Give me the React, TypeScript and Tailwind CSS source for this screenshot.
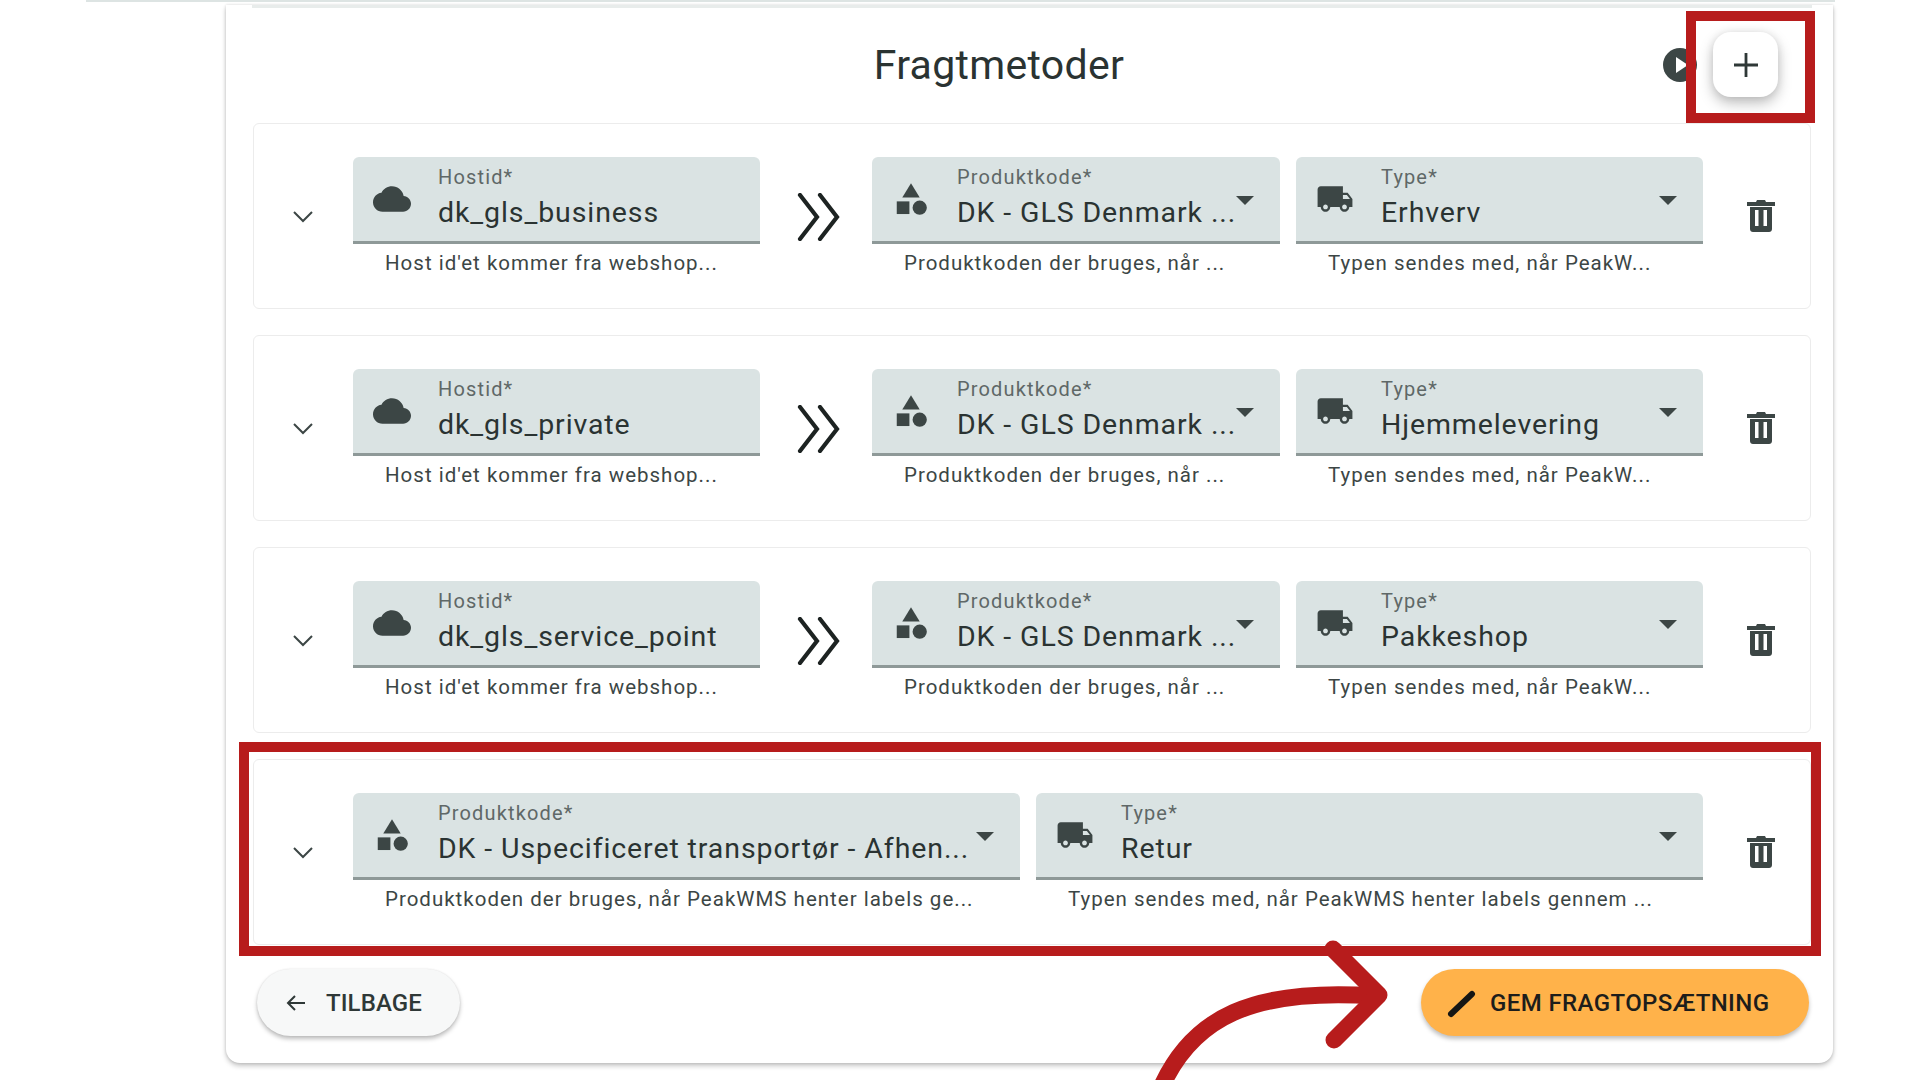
import type { ReactNode } from "react";

function Icon({ size, className, children }: { size: number; className?: string; children: ReactNode }) {
  return (
    <svg width={size} height={size} viewBox="0 0 24 24" fill="currentColor" className={className}>
      {children}
    </svg>
  );
}

function CloudIcon() {
  return (
    <Icon size={38}>
      <path d="M19.35 10.04C18.67 6.59 15.64 4 12 4 9.11 4 6.6 5.64 5.35 8.04 2.34 8.36 0 10.91 0 14c0 3.31 2.69 6 6 6h13c2.76 0 5-2.24 5-5 0-2.64-2.05-4.78-4.65-4.96z" />
    </Icon>
  );
}

function CategoryIcon() {
  return (
    <Icon size={38}>
      <path d="M12 2l-5.5 9h11z" />
      <circle cx="17.5" cy="17.5" r="4.5" />
      <path d="M3 13.5h8v8H3z" />
    </Icon>
  );
}

function TruckIcon() {
  return (
    <Icon size={38}>
      <path d="M20 8h-3V4H3c-1.1 0-2 .9-2 2v11h2c0 1.66 1.34 3 3 3s3-1.34 3-3h6c0 1.66 1.34 3 3 3s3-1.34 3-3h2v-5l-3-4zM6 18.5c-.83 0-1.5-.67-1.5-1.5s.67-1.5 1.5-1.5 1.5.67 1.5 1.5-.67 1.5-1.5 1.5zm13.5-9l1.96 2.5H17V9.5h2.5zm-1.5 9c-.83 0-1.5-.67-1.5-1.5s.67-1.5 1.5-1.5 1.5.67 1.5 1.5-.67 1.5-1.5 1.5z" />
    </Icon>
  );
}

function TrashIcon() {
  return (
    <svg width="28" height="32" viewBox="0 0 28 32" fill="#3c4645">
      <path
        fillRule="evenodd"
        d="M10 0h8l1 2h9v4H0V2h9zM3 7h22v22c0 1.7-1.3 3-3 3H6c-1.7 0-3-1.3-3-3zM8 10v16h3.5V10zM16.5 10v16H20V10z"
      />
    </svg>
  );
}

function Chevron() {
  return (
    <svg width="22" height="13" viewBox="0 0 22 13" fill="none" stroke="#3c4645" strokeWidth="2">
      <path d="M2 2l9 9 9-9" />
    </svg>
  );
}

function DoubleArrow() {
  return (
    <svg width="44" height="48" viewBox="0 0 44 48" fill="none" stroke="#1d2322" strokeWidth="4.2" strokeLinecap="round">
      <path d="M3 2l17 22L3 46" />
      <path d="M23 2l17 22-17 22" />
    </svg>
  );
}

interface FieldProps {
  icon: ReactNode;
  label: string;
  value: string;
  helper: string;
  width: string;
  select?: boolean;
}

function Field({ icon, label, value, helper, width, select }: FieldProps) {
  return (
    <div className={width}>
      <div className="relative flex h-[87px] rounded-t-[6px] border-b-[3px] border-[#8e9998] bg-[#dae3e3]">
        <div className="flex w-[85px] shrink-0 items-center pb-[1px] pl-[20px] text-[#3c4645]">{icon}</div>
        <div className="min-w-0 pt-[8px]">
          <div className="text-[20px] leading-[24px] tracking-[1.15px] text-[#5f6867]">{label}</div>
          <div className="mt-[6px] whitespace-nowrap text-[28.5px] leading-[36px] tracking-[0.9px] text-[#2a3332]">{value}</div>
        </div>
        {select && (
          <div className="absolute right-[26px] top-[39px] h-0 w-0 border-x-[9px] border-t-[9px] border-x-transparent border-t-[#3c4645]" />
        )}
      </div>
      <div className="mt-[7px] whitespace-nowrap pl-[32px] text-[20.5px] leading-[24px] tracking-[1px] text-[#3c4645]">{helper}</div>
    </div>
  );
}

function Row({ children }: { children: ReactNode }) {
  return (
    <div className="flex h-[186px] items-center rounded-[6px] border border-[#ececec] bg-white">
      <div className="flex w-[99px] shrink-0 justify-center pr-[2px]">
        <Chevron />
      </div>
      <div className="flex h-full flex-1 items-start pt-[33px]">{children}</div>
      <div className="flex w-[107px] shrink-0 justify-center pl-[8px]">
        <TrashIcon />
      </div>
    </div>
  );
}

const rows = [
  { host: "dk_gls_business", type: "Erhverv" },
  { host: "dk_gls_private", type: "Hjemmelevering" },
  { host: "dk_gls_service_point", type: "Pakkeshop" },
];

export default function App() {
  return (
    <div className="relative h-screen w-full overflow-hidden bg-white font-['Roboto',sans-serif]">
      <div className="ml-[86px] h-[2px] w-[1749px] bg-[#dde4e3]" />
      <div className="ml-[226px] h-[1058px] w-[1607px] rounded-b-[14px] bg-white pl-[26px] pr-[21px] shadow-[0_3px_5px_rgba(0,0,0,0.22),0_0_3px_rgba(0,0,0,0.14)]">
        <div className="mt-[3px] h-[3px] w-full bg-[#e8eceb]" />

        <div className="relative flex h-[115px] items-center justify-center pr-[66px]">
          <h1 className="text-[41px] font-normal leading-none tracking-[0.3px] text-[#2a3332]">Fragtmetoder</h1>
          <div className="absolute right-[115px] top-[40px] flex h-[34px] w-[34px] items-center justify-center rounded-full bg-[#3c4645]">
            <div className="ml-[3px] h-0 w-0 border-y-[8px] border-l-[12px] border-y-transparent border-l-white" />
          </div>
          <button className="absolute right-[34px] top-[24px] flex h-[65px] w-[65px] items-center justify-center rounded-[18px] bg-white shadow-[0_6px_14px_rgba(0,0,0,0.26),0_0_8px_rgba(0,0,0,0.08)]">
            <svg width="26" height="26" viewBox="0 0 26 26" stroke="#2f3837" strokeWidth="2.8">
              <path d="M13 1v24M1 13h24" />
            </svg>
          </button>
        </div>

        <div className="mx-[1px] flex flex-col gap-[26px]">
          {rows.map((r) => (
            <Row key={r.host}>
              <Field
                width="w-[407px]"
                icon={<CloudIcon />}
                label="Hostid*"
                value={r.host}
                helper="Host id'et kommer fra webshop..."
              />
              <div className="flex w-[112px] shrink-0 justify-center pl-[6px] pt-[36px]">
                <DoubleArrow />
              </div>
              <Field
                width="w-[408px]"
                icon={<CategoryIcon />}
                label="Produktkode*"
                value="DK - GLS Denmark ..."
                helper="Produktkoden der bruges, når ..."
                select
              />
              <div className="w-[16px] shrink-0" />
              <Field
                width="w-[407px]"
                icon={<TruckIcon />}
                label="Type*"
                value={r.type}
                helper="Typen sendes med, når PeakW..."
                select
              />
            </Row>
          ))}
          <Row>
            <Field
              width="w-[667px]"
              icon={<CategoryIcon />}
              label="Produktkode*"
              value="DK - Uspecificeret transportør - Afhen..."
              helper="Produktkoden der bruges, når PeakWMS henter labels ge..."
              select
            />
            <div className="w-[16px] shrink-0" />
            <Field
              width="w-[667px]"
              icon={<TruckIcon />}
              label="Type*"
              value="Retur"
              helper="Typen sendes med, når PeakWMS henter labels gennem ..."
              select
            />
          </Row>
        </div>

        <div className="mt-[24px] flex items-center justify-between pl-[5px] pr-[3px]">
          <button className="flex h-[67px] w-[203px] items-center gap-[18px] rounded-full bg-[#f7f8f8] pl-[27px] pt-[1px] text-[24px] font-medium tracking-[0.1px] text-[#2f3837] shadow-[0_3px_4px_rgba(0,0,0,0.25),0_0_2px_rgba(0,0,0,0.1)]">
            <svg width="24" height="24" viewBox="0 0 24 24" fill="none" stroke="#2f3837" strokeWidth="2">
              <path d="M21 12H4M11 5l-7 7 7 7" />
            </svg>
            TILBAGE
          </button>
          <button className="flex h-[67px] w-[388px] items-center gap-[13px] rounded-full bg-[#ffb24a] pl-[26px] pt-[1px] text-[24px] font-medium tracking-[0.4px] text-[#1d1d1b] shadow-[0_3px_4px_rgba(0,0,0,0.25)]">
            <svg width="30" height="30" viewBox="0 0 30 30" fill="none" stroke="#161614" strokeWidth="6" strokeLinecap="round">
              <path d="M4 26L25 6" />
            </svg>
            GEM FRAGTOPSÆTNING
          </button>
        </div>
      </div>

      {/* annotations on top of the screenshot */}
      <div className="absolute left-[1686px] top-[11px] h-[112px] w-[129px] border-[10px] border-[#b71c1c]" />
      <div className="absolute left-[239px] top-[742px] h-[214px] w-[1582px] border-[10px] border-[#b71c1c]" />
      <svg className="absolute left-0 top-0" width="1920" height="1080" fill="none" stroke="#b71c1c" strokeWidth="17" strokeLinecap="round" strokeLinejoin="round">
        <path d="M1158 1095C1190 1015 1255 988 1375 996" />
        <path d="M1333 949l46 46-45 45" />
      </svg>
    </div>
  );
}
